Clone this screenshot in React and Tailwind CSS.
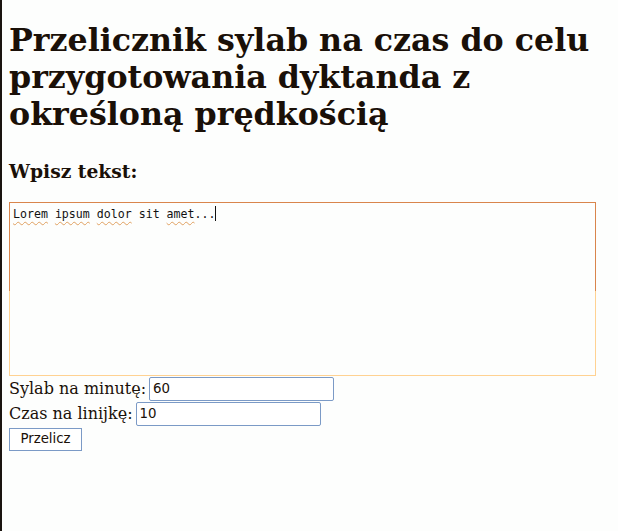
import React, { useState } from 'react';

const serif = { fontFamily: '"DejaVu Serif", serif' };
const sans = { fontFamily: '"DejaVu Sans", sans-serif' };

const Squiggle = ({ children }) => (
  <span className="underline decoration-wavy decoration-[#e0a060] decoration-1 underline-offset-[3px]">
    {children}
  </span>
);

const App = () => {
  const [perMinute, setPerMinute] = useState('60');
  const [perLine, setPerLine] = useState('10');

  return (
    <div className="min-h-[531px] bg-[#fdfefd] border-l-2 border-[#1a1410] pl-[7px] pt-[21px] text-[#1a1008]" style={serif}>
      {/* Header */}
      <h1 className="text-[31.7px] font-bold leading-[37px] m-0 pr-2">
        Przelicznik sylab na czas do celu przygotowania dyktanda z określoną prędkością
      </h1>
      <h3 className="text-[18.7px] font-bold leading-[22px] mt-[28px] mb-[20px]">Wpisz tekst:</h3>

      {/* Text area */}
      <div className="w-[587px] h-[174px] p-px bg-[linear-gradient(to_bottom,#d9854c_51%,#ffd292_51%)]">
        <div
          className="h-full bg-[#fdfefd] px-[3px] pt-[3px] text-[11.6px] leading-[14px] text-[#111]"
          style={{ fontFamily: '"DejaVu Sans Mono", monospace' }}
        >
          <Squiggle>Lorem</Squiggle> <Squiggle>ipsum</Squiggle> <Squiggle>dolor</Squiggle> sit <Squiggle>amet</Squiggle>...
          <span className="inline-block w-px h-[15px] bg-[#111] align-[-3px]" />
        </div>
      </div>

      {/* Inputs */}
      <div className="flex items-center h-[25px] text-[16px]">
        <span>Sylab na minutę:</span>
        <input
          value={perMinute}
          onChange={(e) => setPerMinute(e.target.value)}
          className="ml-[3px] w-[185px] h-[24px] border border-[#7b9ac6] rounded-[2px] px-[3px] text-[13.33px] bg-white outline-none"
          style={sans}
        />
      </div>
      <div className="flex items-center h-[25px] text-[16px]">
        <span>Czas na linijkę:</span>
        <input
          value={perLine}
          onChange={(e) => setPerLine(e.target.value)}
          className="ml-[3px] w-[185px] h-[24px] border border-[#7b9ac6] rounded-[2px] px-[3px] text-[13.33px] bg-white outline-none"
          style={sans}
        />
      </div>
      <div className="flex items-center h-[26px]">
        <button
          className="w-[73px] h-[23px] border border-[#7b9ac6] bg-white text-[13.33px] text-[#1a1008]"
          style={sans}
        >
          Przelicz
        </button>
      </div>
    </div>
  );
};

export default App;
